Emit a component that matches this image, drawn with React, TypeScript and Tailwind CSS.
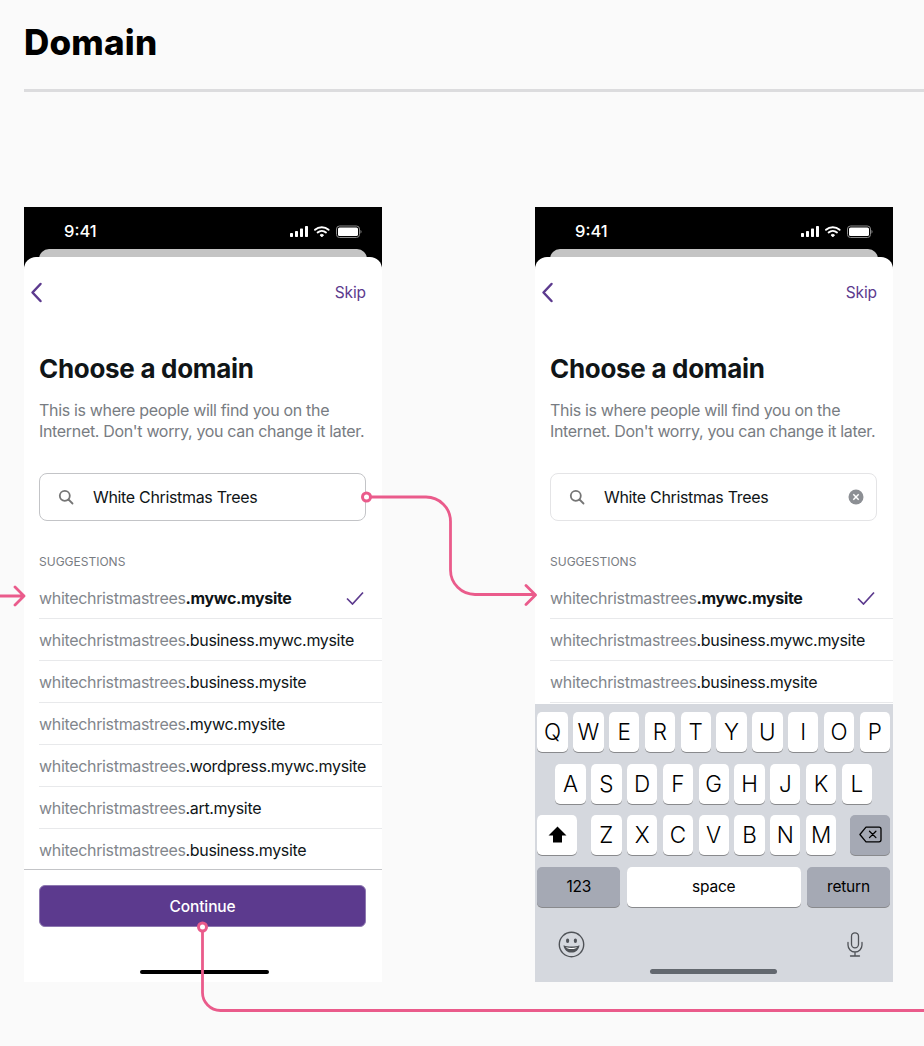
import React from 'react';

const rows = [
  { name: '.mywc.mysite', bold: true },
  { name: '.business.mywc.mysite' },
  { name: '.business.mysite' },
  { name: '.mywc.mysite' },
  { name: '.wordpress.mywc.mysite' },
  { name: '.art.mysite' },
  { name: '.business.mysite' },
];

const StatusIcons = () => (
  <svg width="72" height="14" viewBox="0 0 72 14" fill="none">
    <rect x="0" y="8" width="3" height="4" rx="0.7" fill="#fff" />
    <rect x="5" y="6" width="3" height="6" rx="0.7" fill="#fff" />
    <rect x="10" y="3.500" width="3" height="8.500" rx="0.7" fill="#fff" />
    <rect x="15" y="1" width="3" height="11" rx="0.7" fill="#fff" />
    <path d="M25 4.800a10.200 10.200 0 0 1 13.600 0" stroke="#fff" strokeWidth="1.900" strokeLinecap="round" />
    <path d="M27.600 7.500a6.400 6.400 0 0 1 8.400 0" stroke="#fff" strokeWidth="1.900" strokeLinecap="round" />
    <path d="M30 10a2.800 2.800 0 0 1 3.600 0L31.800 12z" fill="#fff" stroke="#fff" strokeWidth="0.800" strokeLinejoin="round" />
    <rect x="46.500" y="1" width="23" height="11.500" rx="3" stroke="#8a8a8a" strokeWidth="1" />
    <rect x="48" y="2.500" width="20" height="8.500" rx="1.600" fill="#fff" />
    <path d="M70.500 5v3.400c.7-.3 1-1 1-1.700s-.3-1.400-1-1.700z" fill="#8a8a8a" />
  </svg>
);

const Key = ({ label }: { label: string }) => (
  <div className="w-[30.4px] h-10 shrink-0 flex items-center justify-center bg-white rounded-[5px] shadow-[0_1px_0_#898a8d] text-[22.5px] font-light text-black">
    {label}
  </div>
);

const Keyboard = () => (
  <div className="absolute left-0 right-0 bottom-0 h-[278px] bg-[#d5d8de] pt-2 pl-[2.4px] pr-[3px] flex flex-col">
    <div className="flex justify-between">
      {'QWERTYUIOP'.split('').map(k => <Key key={k} label={k} />)}
    </div>
    <div className="flex justify-center gap-[5.4px] mt-[11.6px]">
      {'ASDFGHJKL'.split('').map(k => <Key key={k} label={k} />)}
    </div>
    <div className="flex justify-between mt-[11.4px]">
      <div className="w-10 h-10 flex items-center justify-center bg-white rounded-[5px] shadow-[0_1px_0_#898a8d]">
        <svg width="19" height="17" viewBox="0 0 19 17"><path d="M9.500 0.500 18.500 9.500H14V16.500H5V9.500H0.500z" fill="#000" /></svg>
      </div>
      <div className="flex gap-[5.4px]">
        {'ZXCVBNM'.split('').map(k => <Key key={k} label={k} />)}
      </div>
      <div className="w-10 h-10 flex items-center justify-center bg-[#a5a9b4] rounded-[5px] shadow-[0_1px_0_#898a8d]">
        <svg width="23" height="17" viewBox="0 0 23 17" fill="none" stroke="#000" strokeWidth="1.300" strokeLinejoin="round" strokeLinecap="round">
          <path d="M7 1.200H20a2 2 0 0 1 2 2v10.600a2 2 0 0 1-2 2H7L.9 8.500z" />
          <path d="M10.500 5.200l6.400 6.400M16.900 5.200l-6.400 6.400" />
        </svg>
      </div>
    </div>
    <div className="flex justify-between mt-[11.6px] text-[15.5px] tracking-[-0.2px] text-black">
      <div className="w-[83px] h-10 flex items-center justify-center bg-[#a5a9b4] rounded-[5px] shadow-[0_1px_0_#898a8d]">123</div>
      <div className="w-[174px] h-10 flex items-center justify-center bg-white rounded-[5px] shadow-[0_1px_0_#898a8d]">space</div>
      <div className="w-[83px] h-10 flex items-center justify-center bg-[#a5a9b4] rounded-[5px] shadow-[0_1px_0_#898a8d]">return</div>
    </div>
    <div className="flex justify-between items-center pl-[21px] pr-[27px] mt-[24px]">
      <svg width="27" height="27" viewBox="0 0 27 27" fill="none">
        <circle cx="13.500" cy="13.500" r="12.200" stroke="#4f5257" strokeWidth="1.400" />
        <ellipse cx="9.600" cy="9.800" rx="1.600" ry="2.200" fill="#4f5257" />
        <ellipse cx="17.400" cy="9.800" rx="1.600" ry="2.200" fill="#4f5257" />
        <path d="M5.500 14.200c2.500 1 5 1.400 8 1.400s5.500-.4 8-1.400c-.5 4.600-3.800 7.400-8 7.400s-7.500-2.800-8-7.400z" fill="#4f5257" />
        <path d="M8 16.300c1.800.4 3.500.6 5.500.6s3.700-.2 5.500-.6c-.6 1-2.400 1.800-5.500 1.800s-4.900-.8-5.500-1.800z" fill="#fff" />
      </svg>
      <svg width="16" height="25" viewBox="0 0 16 25" fill="none" stroke="#4f5257" strokeWidth="1.300" strokeLinecap="round">
        <rect x="4.500" y="0.800" width="7" height="15" rx="3.500" />
        <path d="M1 10.500v2.500a7 7 0 0 0 14 0v-2.500M8 20v4M3.500 24h9" />
      </svg>
    </div>
    <div className="absolute left-[115px] bottom-[8px] w-[127px] h-[5px] rounded-full bg-[#63686f]" />
  </div>
);

const Phone = ({ typing }: { typing?: boolean }) => (
  <div className="relative w-[358px] h-[775px] bg-black overflow-hidden shrink-0">
    <div className="flex items-center justify-between h-[49px] pl-10 pr-[20px] text-white">
      <span className="text-[16.5px] font-medium">9:41</span>
      <StatusIcons />
    </div>
    <div className="mx-[15px] h-4 -mt-[7px] rounded-t-[10px] bg-[#c4c4c4]" />
    <div className="absolute left-0 right-0 top-[50px] bottom-0 bg-white rounded-t-[12px] flex flex-col">
      <div className="flex items-center justify-between h-[70px] pl-[6px] pr-[16px]">
        <svg width="13" height="21" viewBox="0 0 13 21" fill="none" stroke="#5c3a8e" strokeWidth="2.500" strokeLinecap="round" strokeLinejoin="round">
          <path d="M10.500 2 2.500 10.500l8 8.500" />
        </svg>
        <span className="pt-[1px] text-[15.500px] tracking-[-0.1px] text-[#5c3a8e]">Skip</span>
      </div>
      <div className="pl-[15px] pr-[16px] pt-[25px]">
        <h2 className="text-[26px] leading-[34px] font-bold tracking-[-0.3px] text-[#101517]">Choose a domain</h2>
        <p className="mt-[14px] text-[16px] leading-[21px] tracking-[-0.33px] text-[#787c82]">
          This is where people will find you on the
          <br />
          Internet. Don't worry, you can change it later.
        </p>
        <div className={`mt-[31px] h-[48px] flex items-center rounded-[8px] border pl-[18px] pr-[12px] ${typing ? 'border-[#e4e4e6]' : 'border-[#c3c4c7]'}`}>
          <svg width="16" height="16" viewBox="0 0 16 16" fill="none" stroke="#757575" strokeWidth="1.800" strokeLinecap="round">
            <circle cx="6.800" cy="6.800" r="5" />
            <path d="M10.500 10.500 14.500 14.500" />
          </svg>
          <span className="ml-[19px] text-[16px] tracking-[-0.33px] text-[#101517]">White Christmas Trees</span>
          {typing && (
            <svg className="ml-auto" width="16" height="16" viewBox="0 0 16 16" fill="none">
              <circle cx="8" cy="8" r="7.500" fill="#8c8f94" />
              <path d="M5.300 5.300l5.400 5.400M10.700 5.300l-5.400 5.400" stroke="#fff" strokeWidth="1.500" />
            </svg>
          )}
        </div>
        <div className="mt-[33px] text-[12px] leading-4 text-[#787c82]">SUGGESTIONS</div>
      </div>
      <div className="mt-[7px] pl-[15px] flex-1">
        {(typing ? rows.slice(0, 3) : rows).map((r, i) => (
          <div key={i} className="h-[42px] flex items-center justify-between border-b border-[#e8e9eb] pr-[18px] text-[16px] tracking-[-0.33px] whitespace-nowrap">
            <span>
              <span className="text-[#82868c]">whitechristmastrees</span>
              <span className={r.bold ? 'font-bold text-[#101517]' : 'text-[#101517]'}>{r.name}</span>
            </span>
            {r.bold && (
              <svg width="18" height="14" viewBox="0 0 18 14" fill="none" stroke="#5c3a8e" strokeWidth="1.700">
                <path d="M1 7.500 6.500 13 17 1.500" />
              </svg>
            )}
          </div>
        ))}
      </div>
      {typing ? (
        <Keyboard />
      ) : (
        <div className="absolute left-0 right-0 bottom-0 h-[113px] bg-white border-t border-[#c3c4c7] pl-[15px] pr-[16px] pt-[15px]">
          <div className="h-[42px] pt-[1px] flex items-center justify-center rounded-[6px] border border-[#8d78b0] bg-[#5c3a8e] text-white text-[15.500px] tracking-[-0.1px] font-medium">Continue</div>
          <div className="absolute left-[116px] bottom-[8px] w-[129px] h-[4.500px] rounded-full bg-black" />
        </div>
      )}
    </div>
  </div>
);

const App: React.FC = () => {
  return (
    <div className="relative w-[924px] h-[1046px] overflow-hidden bg-[#fafafa] font-['Inter',sans-serif]">
      <div className="pl-6 pt-[21px]">
        <h1 className="text-[35px] leading-[42px] font-extrabold tracking-[0.2px] text-black">Domain</h1>
        <div className="mt-[26px] h-[3px] bg-[#dcdcde]" />
      </div>
      <div className="flex gap-[153px] pl-6 mt-[115px]">
        <Phone />
        <Phone typing />
      </div>
      {/* connectors between the screens */}
      <svg className="absolute inset-0 pointer-events-none" width="924" height="1046" fill="none" stroke="#ea5b8b" strokeWidth="2.800">
        <path d="M0 596H24M15 587l9 9-9 9" strokeLinecap="round" strokeLinejoin="round" />
        <path d="M371 497H426a24.500 24.500 0 0 1 24.500 24.500V570a24.500 24.500 0 0 0 24.500 24.500H535M526 585.500l9.500 9.500-9.500 9.500" strokeLinejoin="round" strokeLinecap="round" />
        <circle cx="366.500" cy="497" r="4" fill="#fff" strokeWidth="3" />
        <path d="M202.500 932V992a18 18 0 0 0 18 18.500H924" />
        <circle cx="202.500" cy="927" r="4" fill="#fff" strokeWidth="3" />
      </svg>
    </div>
  );
};

export default App;
